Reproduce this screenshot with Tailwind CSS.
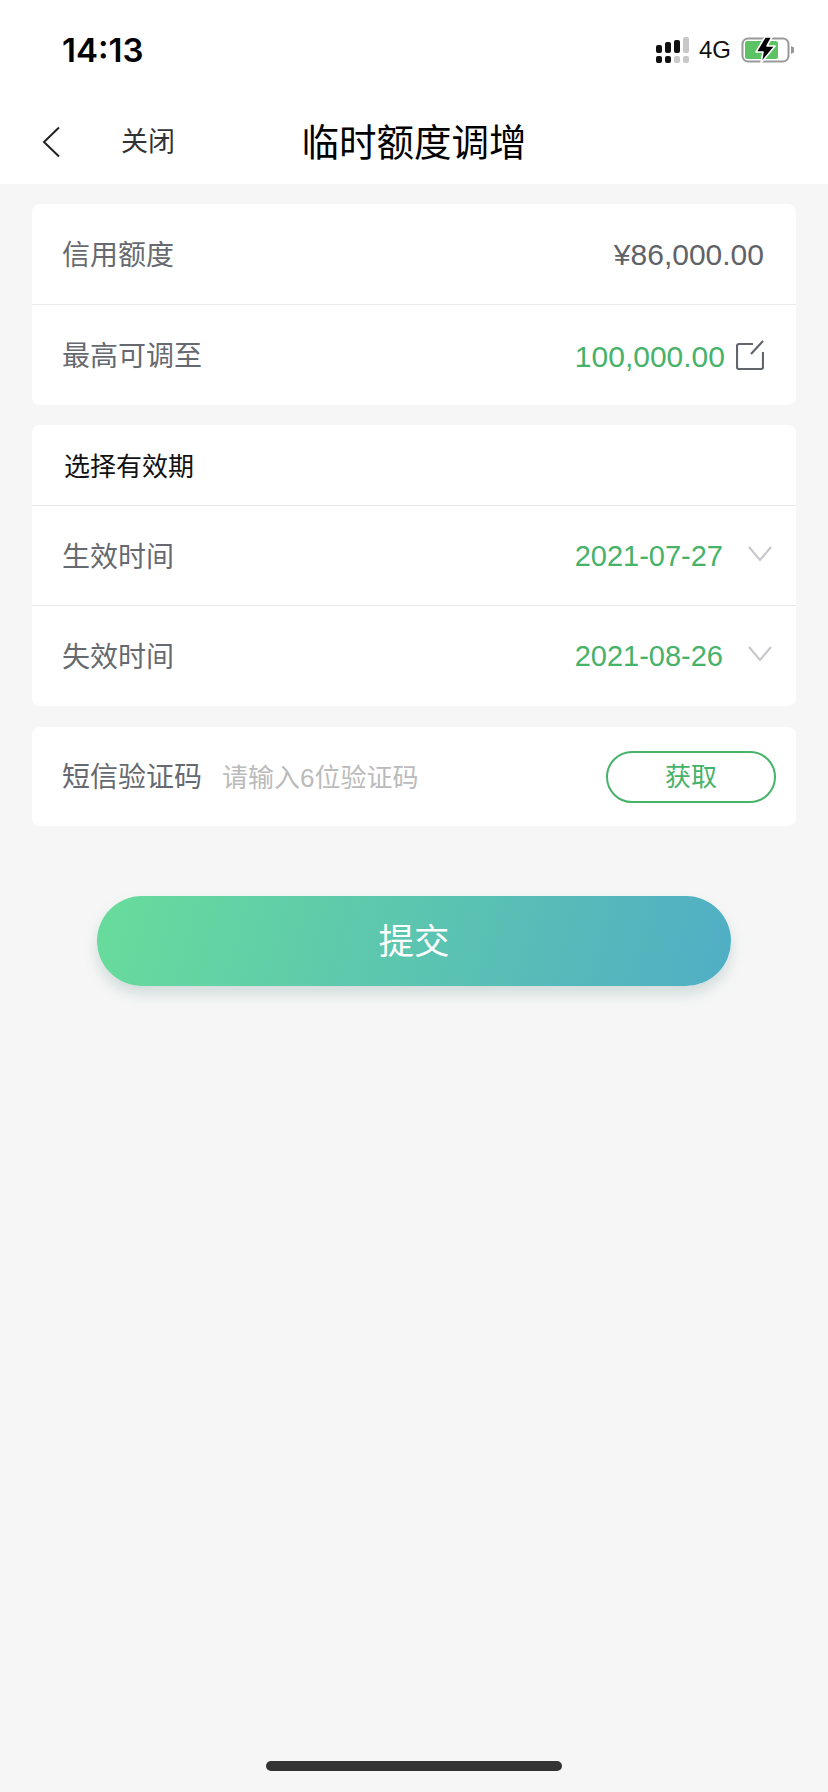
<!doctype html>
<html lang="zh">
<head>
<meta charset="utf-8">
<script src="https://cdn.jsdelivr.net/npm/@tailwindcss/browser@4"></script>
</head>
<body class="m-0">
<div class="relative w-[828px] h-[1792px] bg-[#f6f6f6] overflow-hidden font-['Liberation_Sans','Noto_Sans_CJK_SC',sans-serif]">
  <header class="bg-white h-[184px] flex flex-col">
    <div class="h-[100px] flex items-center justify-between pl-[62px] pr-[33px]">
      <span class="text-[33px] leading-none font-semibold text-black font-['Inter','Liberation_Sans',sans-serif]">14:13</span>
      <div class="flex items-center">
        <svg width="33" height="26" viewBox="0 0 33 26" class="mr-[10px]">
          <rect x="0" y="8" width="6" height="8" rx="2" fill="#111"/>
          <rect x="9" y="5" width="6" height="11" rx="2" fill="#111"/>
          <rect x="18" y="3" width="6" height="13" rx="2" fill="#111"/>
          <rect x="27" y="0" width="6" height="16" rx="2" fill="#c8c8c8"/>
          <rect x="0" y="19" width="6" height="7" rx="2" fill="#111"/>
          <rect x="9" y="19" width="6" height="7" rx="2" fill="#111"/>
          <rect x="18" y="19" width="6" height="7" rx="2" fill="#c8c8c8"/>
          <rect x="27" y="19" width="6" height="7" rx="2" fill="#c8c8c8"/>
        </svg>
        <span class="text-[24px] leading-none text-[#111] mr-[10px]">4G</span>
        <svg width="54" height="28" viewBox="0 0 54 28">
          <rect x="1.5" y="2.5" width="46" height="23" rx="5.5" fill="none" stroke="#999" stroke-width="2"/>
          <rect x="4" y="5" width="33" height="18" rx="2.5" fill="#5cc364"/>
          <path d="M50 10 L53 11.5 V16.5 L50 18 Z" fill="#999"/>
          <path d="M24 1 L15 16 H22 L20 27 L34 10 H26 L31 1 Z" fill="#000" stroke="#fff" stroke-width="1.6" stroke-linejoin="round"/>
        </svg>
      </div>
    </div>
    <div class="relative h-[84px] flex items-center pl-[42px]">
      <svg width="18" height="32" viewBox="0 0 18 32"><path d="M17 1.5 L2 16 L17 30.5" fill="none" stroke="#222" stroke-width="2"/></svg>
      <span class="ml-[61px] text-[27px] leading-none text-[#333] mt-[1px]">关闭</span>
      <h1 class="absolute left-0 right-0 top-[19px] text-center text-[37.5px] leading-[48px] font-normal text-black">临时额度调增</h1>
    </div>
  </header>

  <main class="px-[32px] pt-[20px] flex flex-col">
    <section class="bg-white rounded-[8px]">
      <div class="h-[101px] pt-[3px] border-b border-[#eaeaea] flex items-center justify-between pl-[30px] pr-[32px]">
        <span class="text-[28px] text-[#666a70]">信用额度</span>
        <span class="text-[30px] text-[#5f6368] mb-[2px]">¥86,000.00</span>
      </div>
      <div class="h-[100px] pt-[4px] flex items-center justify-between pl-[30px] pr-[32px]">
        <span class="text-[28px] text-[#666a70]">最高可调至</span>
        <div class="flex items-center gap-[11px]">
          <span class="text-[30px] text-[#46b26a] mb-[2px]">100,000.00</span>
          <svg width="28" height="30" viewBox="0 0 28 30" class="mb-[4px]"><path d="M17 4 H3 Q1 4 1 6 V27 Q1 29 3 29 H25 Q27 29 27 27 V12 M27 1 L15 14" fill="none" stroke="#62666c" stroke-width="2.2"/></svg>
        </div>
      </div>
    </section>

    <section class="mt-[20px] bg-white rounded-[8px]">
      <div class="h-[81px] pt-[4px] border-b border-[#eaeaea] flex items-center pl-[32px]">
        <span class="text-[26px] text-[#111]">选择有效期</span>
      </div>
      <div class="h-[100px] pt-[4px] border-b border-[#eaeaea] flex items-center justify-between pl-[30px] pr-[24px]">
        <span class="text-[28px] text-[#666a70]">生效时间</span>
        <div class="flex items-center gap-[25px]">
          <span class="text-[29px] text-[#46b26a] mb-[2px]">2021-07-27</span>
          <svg width="24" height="18" viewBox="0 0 24 18" class="mb-[8px]"><path d="M1 2 L12 15 L23 2" fill="none" stroke="#c6c6cc" stroke-width="2"/></svg>
        </div>
      </div>
      <div class="h-[100px] pt-[3px] flex items-center justify-between pl-[30px] pr-[24px]">
        <span class="text-[28px] text-[#666a70]">失效时间</span>
        <div class="flex items-center gap-[25px]">
          <span class="text-[29px] text-[#46b26a] mb-[2px]">2021-08-26</span>
          <svg width="24" height="18" viewBox="0 0 24 18" class="mb-[8px]"><path d="M1 2 L12 15 L23 2" fill="none" stroke="#c6c6cc" stroke-width="2"/></svg>
        </div>
      </div>
    </section>

    <section class="mt-[21px] bg-white rounded-[8px] h-[99px] flex items-center pl-[30px] pr-[20px]">
      <span class="text-[28px] text-[#666a70] mt-[3px]">短信验证码</span>
      <span class="ml-[20px] text-[26px] text-[#bbbbbb] mt-[3px]">请输入6位验证码</span>
      <button class="ml-auto w-[170px] h-[52px] rounded-full border-2 border-[#46b26a] bg-white text-[26px] leading-none text-[#46b26a]">获取</button>
    </section>

    <button class="mt-[70px] mx-[65px] h-[90px] pt-[4px] rounded-full bg-linear-[105deg] from-[#68dc9b] to-[#50aec5] text-white text-[35.5px] leading-none shadow-[0_8px_14px_rgba(60,120,110,0.2)]">提交</button>
  </main>

  <div class="absolute left-[266px] bottom-[21px] w-[296px] h-[10px] rounded-full bg-[#333]"></div>
</div>
</body>
</html>
